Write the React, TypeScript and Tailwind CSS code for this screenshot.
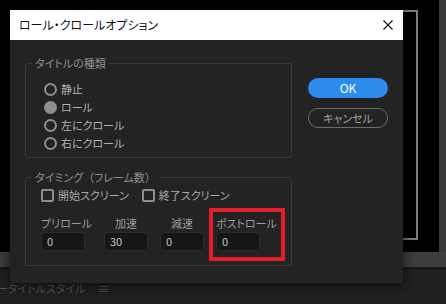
const font = "font-['Noto_Sans_CJK_JP',sans-serif] [font-feature-settings:'palt']"

function Radio({ label, checked }: { label: string; checked?: boolean }) {
  return (
    <div className="flex h-[18px] items-center gap-[4px]">
      <span
        className={
          checked
            ? "h-[13px] w-[13px] rounded-full bg-[#8e8e8e]"
            : "h-[13px] w-[13px] rounded-full border-2 border-[#8e8e8e]"
        }
      />
      <span className="text-[11px] leading-[16px] text-[#b2b2b2]">{label}</span>
    </div>
  )
}

function Check({ label }: { label: string }) {
  return (
    <div className="flex h-[16px] items-center gap-[4px]">
      <span className="h-[13px] w-[13px] rounded-[2px] border-2 border-[#8e8e8e]" />
      <span className="text-[11px] leading-[16px] text-[#a8a8a8]">{label}</span>
    </div>
  )
}

function Field({ label, value, center, className }: { label: string; value: string; center?: boolean; className?: string }) {
  return (
    <div className={"flex w-[44px] flex-col " + (className ?? "")}>
      <span
        className={
          "h-[16px] whitespace-nowrap text-[11px] leading-[16px] text-[#9c9c9c] " + (center ? "text-center" : "")
        }
      >
        {label}
      </span>
      <div className="mt-[1px] flex h-[19px] items-center rounded-[3px] border border-[#2c2c2c] bg-[#161616] pl-[5px] text-[11px] text-[#c4c4c4]">
        {value}
      </div>
    </div>
  )
}

export default function App() {
  return (
    <main className={"relative h-[304px] w-[446px] overflow-hidden bg-black " + font}>
      {/* Background windows */}
      <div className="flex h-[252px]">
        <div className="flex-1 pl-[300px] pr-[21px] pt-[10px]">
          <div className="h-[230px] border-2 border-[#7c7c7c]" />
        </div>
        <div className="w-[7px] bg-[#383838]" />
      </div>
      <div className="h-[15px] bg-[#3e3e3e]" />
      <div className="h-[3px] bg-[#1a1a1a]" />
      <div className="flex h-[34px] items-center gap-[12px] bg-[#212121] pb-[3px] pt-[6px]">
        <span className="-ml-[3px] text-[11px] text-[#5a5a5a]">ータイトルスタイル</span>
        <span className="text-[12px] text-[#5a5a5a]">≡</span>
      </div>

      {/* Dialog */}
      <div className="absolute left-[10px] top-[10px] flex h-[273px] w-[393px] flex-col bg-[#232323] shadow-[0_3px_12px_rgba(0,0,0,0.7)]">
        <div className="flex h-[30px] items-center justify-between bg-white pl-[9px] pr-[10px]">
          <span className="text-[12px] text-[#111]">ロール・クロールオプション</span>
          <svg width="10" height="10" viewBox="0 0 10 10" className="mt-[-1px]">
            <path d="M0.5 0.5 L9.5 9.5 M9.5 0.5 L0.5 9.5" stroke="#111" strokeWidth="1.1" />
          </svg>
        </div>

        <div className="flex pl-[15px] pt-[23px]">
          <div className="flex w-[267px] flex-col">
            {/* タイトルの種類 */}
            <div className="relative h-[95px] rounded-[3px] border border-[#3a3a3a] pl-[18px] pt-[16px]">
              <span className="absolute -top-[9px] left-[6px] bg-[#232323] px-[3px] text-[11px] leading-[16px] text-[#8e8e8e]">
                タイトルの種類
              </span>
              <Radio label="静止" />
              <Radio label="ロール" checked />
              <Radio label="左にクロール" />
              <Radio label="右にクロール" />
            </div>

            {/* タイミング */}
            <div className="relative mt-[19px] h-[89px] rounded-[3px] border border-[#3a3a3a] pl-[15px] pt-[9px]">
              <span className="absolute -top-[9px] left-[6px] bg-[#232323] px-[3px] text-[11px] leading-[16px] text-[#8e8e8e]">
                タイミング<span className="[font-feature-settings:normal]">（</span>フレーム数<span className="[font-feature-settings:normal]">）</span>
              </span>
              <div className="flex gap-[13px]">
                <Check label="開始スクリーン" />
                <Check label="終了スクリーン" />
              </div>
              <div className="mt-[12px] flex">
                <Field label="プリロール" value="0" />
                <Field label="加速" value="30" center className="ml-[19px]" />
                <Field label="減速" value="0" center className="ml-[12px]" />
                <Field label="ポストロール" value="0" className="ml-[12px]" />
              </div>
              <div className="absolute left-[183px] top-[30px] h-[53px] w-[76px] border-4 border-[#e3202a]" />
            </div>
          </div>

          <div className="ml-[16px] flex w-[80px] flex-col pt-[15px]">
            <button className="flex h-[20px] items-center justify-center rounded-full bg-[#2d8ceb] text-[12px] text-white">
              OK
            </button>
            <button className="mt-[10px] flex h-[20px] items-center justify-center rounded-full border border-[#6c6c6c] text-[11px] text-[#a0a0a0]">
              キャンセル
            </button>
          </div>
        </div>
      </div>
    </main>
  )
}
